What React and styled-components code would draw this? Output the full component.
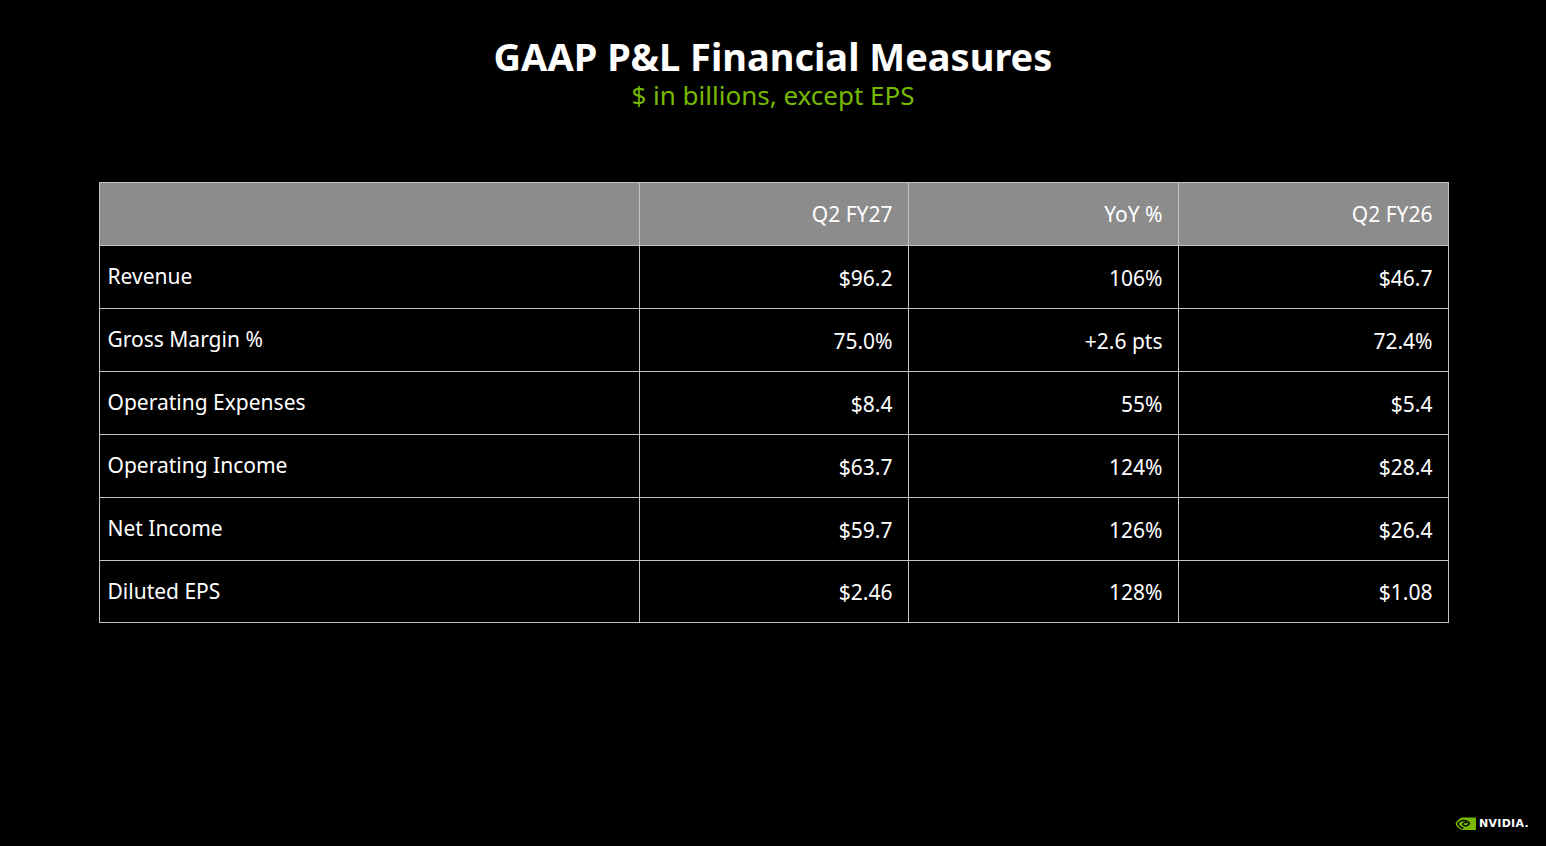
import React from "react";
import styled, { createGlobalStyle } from "styled-components";

const Global = createGlobalStyle`
  html, body { margin: 0; padding: 0; background: #000; }
  body { font-family: "Noto Sans", "Open Sans", sans-serif; color: #fff; }
`;

const Slide = styled.div`
  width: 1546px;
  height: 846px;
  background: #000;
  display: flex;
  flex-direction: column;
  align-items: center;
  position: relative;
  overflow: hidden;
`;

const Title = styled.h1`
  margin: 34px 0 0;
  font-family: "Noto Sans", sans-serif;
  font-weight: 700;
  font-size: 38px;
  line-height: 44px;
  color: #fff;
`;

const Subtitle = styled.div`
  font-size: 26px;
  line-height: 30px;
  color: #76b900;
  margin-top: 2px;
`;

const Table = styled.table`
  margin-top: 72px;
  margin-left: 1px;
  width: 1349px;
  border-collapse: collapse;
  border: 1px solid #e0e0e0;
  table-layout: fixed;
`;

const Col = styled.col`
  width: ${(p) => p.$w}px;
`;

const HeadRow = styled.tr`
  background: #8c8c8c;
  height: 63px;
`;

const Row = styled.tr`
  height: 63px;
  &:last-child { height: 62px; }
`;

const Th = styled.th`
  box-sizing: border-box;
  font-weight: 400;
  font-size: 21px;
  color: #fff;
  text-align: right;
  padding: 0 15px 0 8px;
  border: 1px solid #c4c4c4;
`;

const Td = styled.td`
  box-sizing: border-box;
  font-size: 21px;
  color: #fff;
  text-align: ${(p) => (p.$label ? "left" : "right")};
  padding: ${(p) => (p.$label ? "0 8px 2px" : "1px 15px 0 8px")};
  border: 1px solid #c4c4c4;
`;

const Logo = styled.div`
  position: absolute;
  right: 17px;
  bottom: 15px;
  display: flex;
  align-items: center;
  gap: 3px;
`;

const LogoText = styled.span`
  font-family: "DejaVu Sans", sans-serif;
  font-weight: 700;
  font-size: 11px;
  letter-spacing: 0.3px;
  color: #fff;
`;

const rows = [
  ["Revenue", "$96.2", "106%", "$46.7"],
  ["Gross Margin %", "75.0%", "+2.6 pts", "72.4%"],
  ["Operating Expenses", "$8.4", "55%", "$5.4"],
  ["Operating Income", "$63.7", "124%", "$28.4"],
  ["Net Income", "$59.7", "126%", "$26.4"],
  ["Diluted EPS", "$2.46", "128%", "$1.08"],
];

const Eye = () => (
  <svg width="21" height="15" viewBox="0 0 21 15">
    <path d="M7 1.5 L21 1.5 L21 14 L7 14 C3.5 13 1 10 0.5 7.8 C2 4.5 4.5 2.3 7 1.5 Z" fill="#76b900" />
    <path d="M8.5 12.3 C5 11.6 2.8 7.8 2.8 7.8 C2.8 7.8 4.8 4.6 8.5 4.4 C12.2 4.4 14.6 7.3 14.6 7.3 C14.6 7.3 12.8 10 10.4 10 C8.5 10 7.5 8.2 7.5 8.2 C7.5 8.2 8.2 6.3 10.2 6.3 C11.2 6.3 12 7.1 12 7.1"
      fill="none" stroke="#000" strokeWidth="1.3" />
  </svg>
);

export default function App() {
  return (
    <Slide>
      <Global />
      <Title>GAAP P&amp;L Financial Measures</Title>
      <Subtitle>$ in billions, except EPS</Subtitle>
      <Table>
        <colgroup>
          <Col $w={540} />
          <Col $w={269} />
          <Col $w={270} />
          <Col $w={270} />
        </colgroup>
        <thead>
          <HeadRow>
            <Th></Th>
            <Th>Q2 FY27</Th>
            <Th>YoY %</Th>
            <Th>Q2 FY26</Th>
          </HeadRow>
        </thead>
        <tbody>
          {rows.map((r) => (
            <Row key={r[0]}>
              <Td $label>{r[0]}</Td>
              <Td>{r[1]}</Td>
              <Td>{r[2]}</Td>
              <Td>{r[3]}</Td>
            </Row>
          ))}
        </tbody>
      </Table>
      <Logo>
        <Eye />
        <LogoText>NVIDIA.</LogoText>
      </Logo>
    </Slide>
  );
}
